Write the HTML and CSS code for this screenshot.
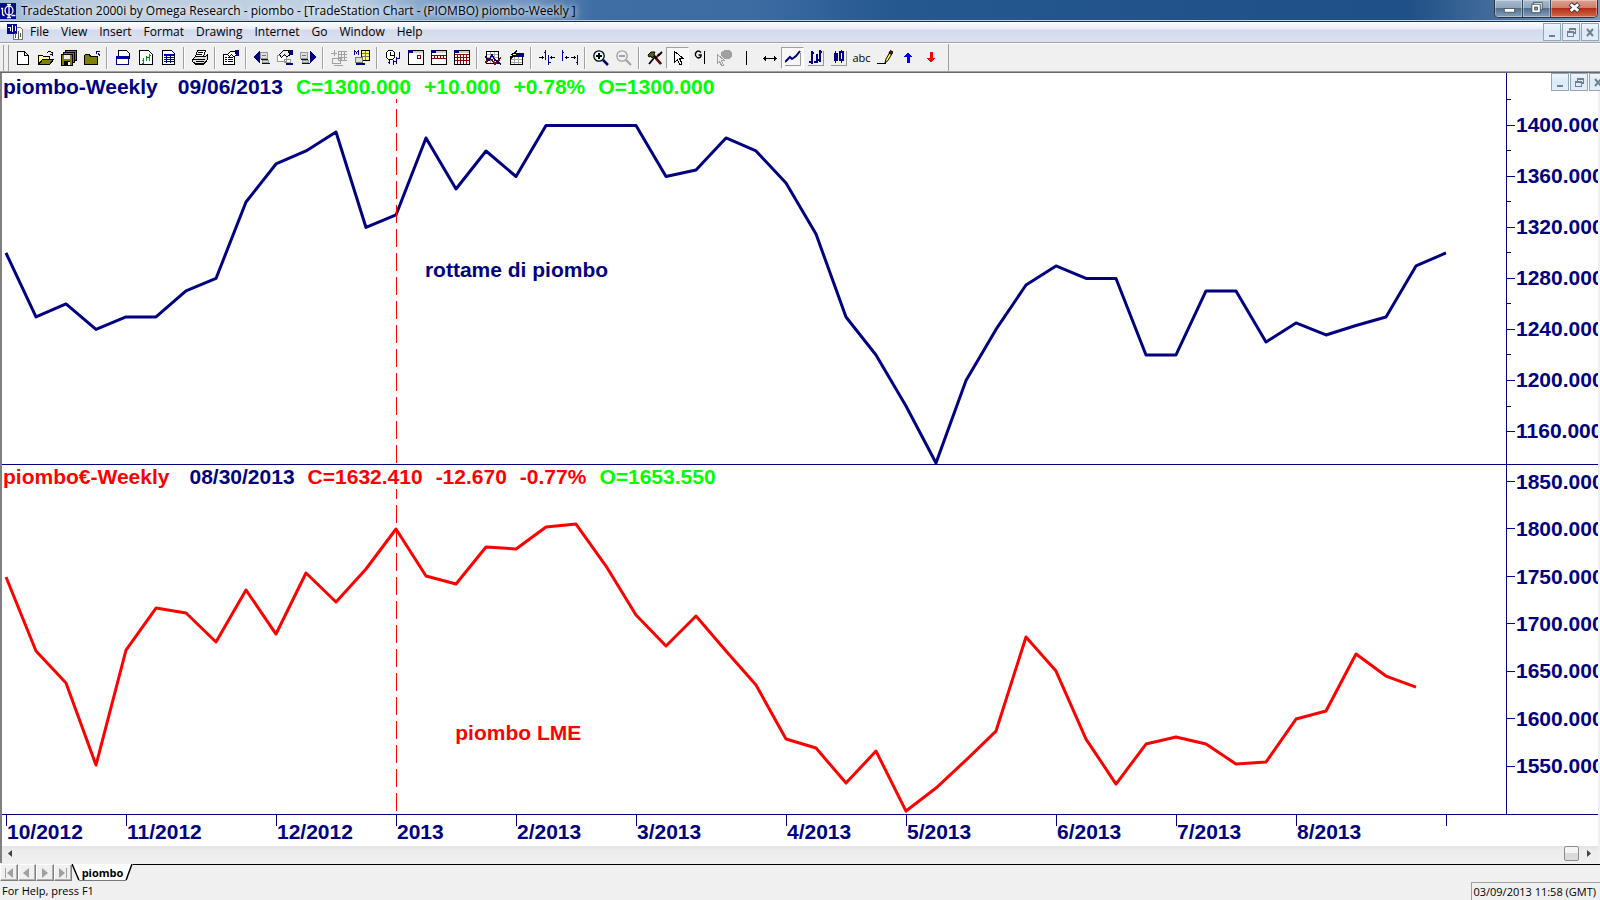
FILE: index.html
```html
<!DOCTYPE html>
<html lang="en">
<head>
<meta charset="utf-8">
<title>TradeStation 2000i by Omega Research - piombo</title>
<link rel="stylesheet" href="styles.css">
</head>
<body>
<header class="titlebar">
  <svg class="app-icon" viewBox="0 0 16 16"><path fill="#000a8c" d="M0 0h16v16H0z"/><path fill="none" stroke="#fff" stroke-width="1.300" d="M1 5.500h1.500v5q0 2 2 2M9 1.500v13M7 1.500h4M7 14.500h4M11.500 12.500h4"/><ellipse cx="9" cy="7.500" rx="4" ry="4.500" fill="none" stroke="#fff" stroke-width="1.300"/></svg>
  <h1 class="title">TradeStation 2000i by Omega Research - piombo - [TradeStation Chart - (PIOMBO) piombo-Weekly ]</h1>
  <div class="win-buttons">
    <button class="win-btn" aria-label="Minimize"><svg viewBox="0 0 28 18"><rect x="9" y="9" width="11" height="4" fill="#fff" stroke="#4b5a6c"/></svg></button>
    <button class="win-btn" aria-label="Restore"><svg viewBox="0 0 28 18"><g fill="#fff" stroke="#3f4d5e"><path d="M10.500 2.500h9v8h-9z"/><path d="M8.500 4.500h9v9h-9z"/><path fill="#8fa3b8" d="M11.500 7.500h3v3h-3z"/></g></svg></button>
    <button class="win-btn win-close" aria-label="Close"><svg viewBox="0 0 46 18"><path d="M19 4l9 8M28 4l-9 8" stroke="#3d3036" stroke-width="5"/><path d="M19.500 4.500l8 7M27.500 4.500l-8 7" stroke="#fff" stroke-width="3"/></svg></button>
  </div>
</header>

<nav class="menubar">
  <svg class="doc-icon" viewBox="0 0 16 16" shape-rendering="crispEdges"><path fill="#fff" stroke="#777" d="M6.500 3.500h7l2 2v10h-9z"/><path fill="#000a8c" d="M0 0h10v10H0z"/><path fill="none" stroke="#fff" d="M1 3h2v4M5.500 1v7M8 2v5"/><path fill="none" stroke="#555" d="M8 9v5M11.500 7v8M13 9v4"/></svg>
  <button class="menu">File</button><button class="menu">View</button><button class="menu">Insert</button><button class="menu">Format</button><button class="menu">Drawing</button><button class="menu">Internet</button><button class="menu">Go</button><button class="menu">Window</button><button class="menu">Help</button>
  <div class="mdi-buttons">
    <button class="mdi-btn" aria-label="Minimize chart"><svg viewBox="0 0 16 16"><path d="M5 11h6v2H5z"/></svg></button>
    <button class="mdi-btn" aria-label="Restore chart"><svg viewBox="0 0 16 16"><path fill-rule="evenodd" d="M6 4h7v6h-2V8h1V6H7v1H6zM4 7h7v6H4zM5 9v3h5V9z"/></svg></button>
    <button class="mdi-btn" aria-label="Close chart"><svg viewBox="0 0 16 16"><path d="M5 5l6 7M11 5l-6 7" stroke="#72808e" stroke-width="2"/></svg></button>
  </div>
</nav>

<div class="toolbar" role="toolbar" aria-label="Charting">
  <span class="grip"></span>
  <button class="tool" aria-label="New"><svg viewBox="0 0 16 16"><path fill="#fff" stroke="#000" d="M2.500 1.500h7l4 4v9h-11zM9.500 1.500v4h4"/></svg></button>
  <button class="tool" aria-label="Open"><svg viewBox="0 0 16 16"><path fill="#ffffa0" stroke="#000" d="M.5 13.500v-8h4l1 1h6v2"/><path fill="#808000" stroke="#000" d="M.5 14.500l4-5h11l-4 5z"/><path fill="none" stroke="#000" d="M9 2.500h1M10 1.500h3M13 2.500h1M14.500 2v4M12 4.500h3"/></svg></button>
  <button class="tool" aria-label="Save all"><svg viewBox="0 0 16 16"><g fill="#808000" stroke="#000"><path d="M4.500.5h11v10h-11z"/><path d="M2.500 2.500h11v10h-11z"/><path d="M.5 4.500h11v11H.5z"/></g><path fill="#eee" d="M3 5h6v4H3z"/><path fill="#000" d="M3 11h6v4H3z"/><path fill="#fff" d="M7 12h2v3H7z"/></svg></button>
  <button class="tool" aria-label="Close folder"><svg viewBox="0 0 16 16"><path fill="#808000" stroke="#000" d="M.5 14.500v-9l1-1h4l1 2h7v8z"/><path fill="none" stroke="#000080" d="M12.500 1v3M12 1.500h4M14 3h1M14 4h2M15.500 4v2"/></svg></button>
  <span class="sep"></span>
  <button class="tool" aria-label="Window"><svg viewBox="0 0 16 16"><path fill="#fff" stroke="#000" d="M3.500.5h8l3 3v5h-11z"/><path fill="#fff" stroke="#000080" d="M1.500 6.500h12v8h-12z"/><path fill="#0000a0" d="M1 6h13v3H1z"/></svg></button>
  <button class="tool" aria-label="New chart"><svg viewBox="0 0 16 16"><path fill="#fff" stroke="#000" d="M1.500.5h9l4 4v10h-13z"/><path fill="none" stroke="#00a000" d="M5.500 8v6M4 10.500h1M8.500 6v5M9 7.500h2M11.500 4v7"/><path fill="none" stroke="#008080" d="M4 13.500h2M8 10.500h1M11 5.500h2"/></svg></button>
  <button class="tool" aria-label="New grid"><svg viewBox="0 0 16 16"><path fill="#fff" stroke="#000" d="M1.500.5h9l3 3v11h-12z"/><path fill="none" stroke="#0000a0" d="M3 7.500h10M3 9.500h10M3 11.500h10M5.500 4v9M9.500 4v9"/><path fill="#0000c0" d="M3 4h10v2H3z"/></svg></button>
  <span class="sep"></span>
  <button class="tool" aria-label="Print"><svg viewBox="0 0 16 16"><path fill="#fff" stroke="#000" d="M5.500.5h8l-2 6h-8z"/><path stroke="#000" d="M6 2.500h5M5 4.500h5"/><path fill="#ddd" stroke="#000" d="M.5 9.500l3-3h10l2-2v5l-3 4H3l-2.500-2z"/><path stroke="#000" fill="none" d="M1 9.500h12M4 11.500h8M12 13.500l3-3M3 14.500h9"/></svg></button>
  <span class="sep"></span>
  <button class="tool" aria-label="Properties"><svg viewBox="0 0 16 16"><path fill="#fff" stroke="#000" d="M.5 4.500h11v10H.5z"/><path stroke="#000" d="M2 7.500h2M5 7.500h5M2 9.500h2M5 9.500h5M2 11.500h2M5 11.500h5"/><path fill="#fff" stroke="#000" d="M4.500 4.500l3-3h5l1 4-3 1-2-2-2 2z"/><path fill="#000080" d="M12 0h4v6h-3z"/></svg></button>
  <span class="sep"></span>
  <button class="tool" aria-label="Previous"><svg viewBox="0 0 16 16"><path fill="#000080" stroke="#000080" d="M.5 7L5.500 2v10z"/><path fill="#ddd" stroke="#999" d="M6.500 2.500h7v6h-7zM8.500 10.500h6v2h-6z"/><path fill="none" stroke="#000080" d="M7 9.500h7M8 13.500h8"/><path stroke="#777" d="M8 5.500h4"/></svg></button>
  <button class="tool" aria-label="Symbol settings"><svg viewBox="0 0 16 16"><path fill="#fff" stroke="#999" d="M.5 5.500h9v6h-9zM7.500 9.500h6v3h-6z"/><path fill="#eee" stroke="#000" d="M2.500 4.500l4-4h5l1 5-3 1-2-2-3 3z"/><path fill="#000080" d="M12 0h4v5h-3zM9 13h7v2H9z"/></svg></button>
  <button class="tool" aria-label="Next"><svg viewBox="0 0 16 16"><path fill="#000080" stroke="#000080" d="M15.500 7L10.500 2v10z"/><path fill="#ddd" stroke="#999" d="M.5 2.500h7v6h-7zM2.500 10.500h6v2h-6z"/><path fill="none" stroke="#000080" d="M1 9.500h7M2 13.500h8"/><path stroke="#777" d="M2 5.500h4"/></svg></button>
  <span class="sep"></span>
  <button class="tool" aria-label="Add symbol" disabled><svg viewBox="0 0 16 16"><path fill="none" stroke="#a0a0a0" d="M0 3.500h6M3.500 0v6M7 1.500h9v9H7zM7 4.500h9M7 7.500h9M10.500 1v9M13.500 1v9M1 8.500h8v5H1zM3 15.500h9"/></svg></button>
  <button class="tool" aria-label="Market data"><svg viewBox="0 0 16 16"><path fill="#ffff60" stroke="#000" d="M7.500.5h8v10h-8z"/><path stroke="#777" d="M8 3.500h7M8 6.500h7M11.500 1v9"/><path fill="none" stroke="#000080" d="M.5 5V0M1 1.500h1M2.500 2v2M3 1.500h1M4.500 0v5"/><path fill="#ddd" stroke="#777" d="M1.500 7.500h7v5h-7z"/><path fill="#000080" d="M2 13h9v2H2z"/></svg></button>
  <span class="sep"></span>
  <button class="tool" aria-label="Time interval"><svg viewBox="0 0 16 16"><circle cx="5.500" cy="5" r="4.500" fill="#fff" stroke="#000"/><path fill="none" stroke="#000" d="M5.500 2v3.500h3"/><path fill="none" stroke="#000080" d="M4.500 10v4M3 12.500h1M8.500 10v5M9 11.500h2M11.500 7v7M14.500 2v7M12 8.500h2"/></svg></button>
  <button class="tool" aria-label="Daily"><svg viewBox="0 0 16 16"><path fill="#fff" stroke="#000" d="M.5.5h15v14H.5z"/><path fill="#000080" d="M0 0h5v3H0z"/><path fill="#ccc" d="M5 1h10v2H5z"/><path fill="none" stroke="#900000" stroke-width="1" d="M9.500 5.500h3v3h-3z"/></svg></button>
  <button class="tool" aria-label="Weekly"><svg viewBox="0 0 16 16"><path fill="#fff" stroke="#000" d="M.5.5h15v14H.5z"/><path fill="#000080" d="M0 0h5v3H0z"/><path fill="#ccc" d="M5 1h10v2H5z"/><path fill="none" stroke="#900000" d="M1 5.500h14M1 8.500h14M3.500 5v4M6.500 5v4M9.500 5v4M12.500 5v4"/></svg></button>
  <button class="tool" aria-label="Monthly"><svg viewBox="0 0 16 16"><path fill="#fff" stroke="#000" d="M.5.5h15v14H.5z"/><path fill="#000080" d="M0 0h5v3H0z"/><path fill="#ccc" d="M5 1h10v2H5z"/><path fill="none" stroke="#900000" d="M1 4.500h14M1 7.500h14M1 10.500h14M3.500 4v10M6.500 4v10M9.500 4v10M12.500 4v10"/></svg></button>
  <span class="sep"></span>
  <button class="tool" aria-label="Analysis technique"><svg viewBox="0 0 16 16"><path fill="#fff" stroke="#000" d="M1.500 1.500h12v12h-12z"/><path stroke="#aaa" d="M2 4.500h11M2 7.500h11M5.500 2v11M9.500 2v11"/><path fill="none" stroke="#900000" stroke-width="1.500" d="M0 13l4-4 3 1 3 4 4-4 2-3"/><path fill="none" stroke="#000080" stroke-width="1.500" d="M0 7l4 3 3-5 3 5 3 2 3 2"/></svg></button>
  <button class="tool" aria-label="Strategy"><svg viewBox="0 0 16 16"><path fill="#fff" stroke="#000" d="M2.500 6.500h12v8h-12z"/><path stroke="#aaa" d="M3 9.500h11M3 12.500h11M6.500 7v7M10.500 7v7"/><path fill="#000080" d="M7 3h9v4H7z"/><path fill="#ffff00" stroke="#000" d="M4 4.500l5-4-2 3h3l-8 6 3-4z"/></svg></button>
  <span class="sep"></span>
  <button class="tool" aria-label="Decrease spacing"><svg viewBox="0 0 16 16"><path fill="none" stroke="#0000a0" d="M6.500 0v10M5 2.500h1M9.500 5v10M10 12.500h2"/><path stroke="#000" fill="none" d="M0 7.500h5M3.500 6v3M11 7.500h5M12.500 6v3"/></svg></button>
  <button class="tool" aria-label="Increase spacing"><svg viewBox="0 0 16 16"><path fill="none" stroke="#0000a0" d="M.5 0v11M1 2.500h1M15.500 5v10M14 12.500h1"/><path stroke="#000" fill="none" d="M3 7.500h4M4.500 6v3M9 7.500h5M12.500 6v3"/></svg></button>
  <span class="sep"></span>
  <button class="tool" aria-label="Zoom in"><svg viewBox="0 0 16 16" class="smooth"><circle cx="6" cy="6" r="5.200" fill="#dff" stroke="#000" stroke-width="1.300"/><path stroke="#000" stroke-width="2" d="M3 6h6M6 3v6"/><path stroke="#000080" stroke-width="2.500" d="M10 10l5 5"/></svg></button>
  <button class="tool" aria-label="Zoom out" disabled><svg viewBox="0 0 16 16" class="smooth"><circle cx="6" cy="6" r="5.200" fill="none" stroke="#a0a0a0" stroke-width="1.300"/><path stroke="#a0a0a0" stroke-width="2" d="M3 6h6"/><path stroke="#a0a0a0" stroke-width="2" d="M10 10l5 5"/></svg></button>
  <span class="sep"></span>
  <button class="tool" aria-label="Build"><svg viewBox="0 0 16 16" class="smooth"><path stroke="#900000" stroke-width="2" d="M12 4L9 8"/><path stroke="#000" stroke-width="1.800" d="M15 2l-4 4M2 14l5-6"/><path fill="#606000" stroke="#000" d="M1 5l3-3h4L7 4l1 2-3 2-1-2-2 1z"/><path stroke="#000" stroke-width="2.600" d="M7 6l7 8"/><path stroke="#900000" stroke-width="1.200" d="M9 9l5 5"/></svg></button>
  <button class="tool pressed" aria-label="Pointer"><svg viewBox="0 0 16 16"><path fill="#fff" stroke="#000" d="M4.500 1.500v11l3-3 2 5h2v-2l-2-4h4z"/></svg></button>
  <button class="tool" aria-label="Global cursor"><svg viewBox="0 0 16 16"><path fill="none" stroke="#000" stroke-width="1.400" class="smooth" d="M8 2.500Q5-.5 3 2.500T5 8q3 0 3.200-3H5.500"/><path stroke="#000" d="M11.500 1v13"/></svg></button>
  <button class="tool" aria-label="Hand pointer" disabled><svg viewBox="0 0 16 16"><path fill="#a0a0a0" d="M5 2l4-2h5l2 3v3l-3 3H8L5 6z"/><path fill="#eee" stroke="#a0a0a0" d="M1.500 4.500v9l2-2 2 4h2l-2-5h3z"/></svg></button>
  <button class="tool" aria-label="Vertical line"><svg viewBox="0 0 16 16"><path stroke="#000" d="M7.500 1v14"/></svg></button>
  <button class="tool" aria-label="Horizontal line"><svg viewBox="0 0 16 16"><path fill="none" stroke="#000" d="M1 8.500h14M3.500 6v5M2.500 7v3M12.500 6v5M13.500 7v3"/></svg></button>
  <button class="tool pressed" aria-label="Line chart"><svg viewBox="0 0 16 16" class="smooth"><path fill="none" stroke="#999" d="M0 15.500h15.500V3"/><path fill="none" stroke="#000080" stroke-width="2" d="M0 12l5-5 2 2 4-3 4-5"/></svg></button>
  <button class="tool" aria-label="Bar chart"><svg viewBox="0 0 16 16"><path fill="none" stroke="#999" d="M0 15.500h15.500V1"/><path fill="none" stroke="#000080" stroke-width="2" d="M4 1v13M1 12h3M4 3h2M9 4v9M6 12h3M12 0v12M9 10h3M12 2h2"/></svg></button>
  <button class="tool" aria-label="Candlestick chart"><svg viewBox="0 0 16 16"><path fill="none" stroke="#999" d="M0 15.500h15.500V1"/><path fill="none" stroke="#000080" d="M4.500 1v12M10.500 0v13"/><path fill="#000080" d="M3 3h4v8H3z"/><path fill="#fff" stroke="#000080" stroke-width="1.500" d="M9 2h3v8H9z"/></svg></button>
  <button class="tool tool-text" aria-label="Text">abc</button>
  <button class="tool" aria-label="Pencil"><svg viewBox="0 0 16 16" class="smooth"><path stroke="#000" d="M0 13.500h9"/><path fill="#ffff40" stroke="#000" d="M8 13l1-4 4-7 2 1.500-4 7z"/><path fill="#900000" stroke="#000" d="M12 3l1.500-2.500L16 2l-1.500 2.500z"/></svg></button>
  <button class="tool" aria-label="Up arrow"><svg viewBox="0 0 16 16"><path fill="#00f" d="M8 2l4 5h-2v6H7V7H4z"/></svg></button>
  <button class="tool" aria-label="Down arrow"><svg viewBox="0 0 16 16"><path fill="#f00" d="M8 13l4-5h-2V2H7v6H4z"/></svg></button>
  <span class="toolbar-end"></span>
</div>

<main class="chart">
  <section class="pane pane-top">
    <svg class="plot" viewBox="0 0 1504 391" preserveAspectRatio="none">
      <polyline class="series navy" points="4,180 34,244 64,231 94,256.500 124,244 154,244 184,218 214,205.500 244,129 274,91 304,78 334,59 364,154.500 394,142 424,65 454,116 484,78 514,103.500 544,52.500 574,52.500 604,52.500 634,52.500 664,103.500 694,97 724,65 754,78 784,110 814,161 844,244 874,282 904,333 934,390 964,307.500 994,256.500 1024,212 1054,193 1084,205.500 1114,205.500 1144,282 1174,282 1204,218 1234,218 1264,269 1294,250 1324,262 1354,252.500 1384,244 1414,193 1444,180"/>
      <path class="marker marker-top" d="M394.500 26V391"/>
    </svg>
    <div class="readout"><span>piombo-Weekly</span><span class="date">09/06/2013</span><span class="lime">C=1300.000</span><span class="lime">+10.000</span><span class="lime">+0.78%</span><span class="lime">O=1300.000</span></div>
    <div class="note note-top">rottame di piombo</div>
    <div class="axis axis-top">
      <svg class="ticks" viewBox="0 0 8 391" preserveAspectRatio="none"><path d="M0 52.500h8M0 103.500h8M0 154.500h8M0 205.500h8M0 256.500h8M0 307.500h8M0 358.500h8M0 26.500h4M0 77.500h4M0 128.500h4M0 179.500h4M0 230.500h4M0 281.500h4M0 333.500h4"/></svg>
      <div class="scale scale-top"><span>1400.000</span><span>1360.000</span><span>1320.000</span><span>1280.000</span><span>1240.000</span><span>1200.000</span><span>1160.000</span></div>
    </div>
  </section>
  <section class="pane pane-bottom">
    <svg class="plot" viewBox="0 0 1504 349" preserveAspectRatio="none">
      <polyline class="series red" points="4,112 34,186 64,218 94,300 124,185 154,143 184,148 214,177 244,125 274,169 304,108 334,137 364,104 394,64 424,111 454,119 484,82 514,84 544,62 574,59 604,101 634,150 664,181 694,151 724,186 754,220 784,274 814,283 844,318 874,286 904,346 934,323 964,295 994,266 1024,172 1054,206 1084,274 1114,319 1144,279 1174,272 1204,279 1234,299 1264,297 1294,254 1324,246 1354,189 1384,211 1414,222"/>
      <path class="marker marker-bottom" d="M394.500 24V349"/>
    </svg>
    <div class="readout red-text"><span>piombo€-Weekly</span><span class="date">08/30/2013</span><span>C=1632.410</span><span>-12.670</span><span>-0.77%</span><span class="lime">O=1653.550</span></div>
    <div class="note note-bottom">piombo LME</div>
    <div class="axis axis-bottom">
      <svg class="ticks" viewBox="0 0 8 349" preserveAspectRatio="none"><path d="M0 16.500h8M0 63.500h8M0 111.500h8M0 158.500h8M0 206.500h8M0 253.500h8M0 301.500h8"/></svg>
      <div class="scale scale-bottom"><span>1850.000</span><span>1800.000</span><span>1750.000</span><span>1700.000</span><span>1650.000</span><span>1600.000</span><span>1550.000</span></div>
    </div>
  </section>
  <div class="dates"><div class="months"><span>10/2012</span><span>11/2012</span><span>12/2012</span><span>2013</span><span>2/2013</span><span>3/2013</span><span>4/2013</span><span>5/2013</span><span>6/2013</span><span>7/2013</span><span>8/2013</span><span></span></div></div>
  <div class="mdi-buttons chart-buttons">
    <button class="mdi-btn" aria-label="Minimize"><svg viewBox="0 0 16 16"><path d="M5 11h6v2H5z"/></svg></button>
    <button class="mdi-btn" aria-label="Restore"><svg viewBox="0 0 16 16"><path fill-rule="evenodd" d="M6 4h7v6h-2V8h1V6H7v1H6zM4 7h7v6H4zM5 9v3h5V9z"/></svg></button>
    <button class="mdi-btn" aria-label="Close"><svg viewBox="0 0 16 16"><path d="M5 5l6 7M11 5l-6 7" stroke="#72808e" stroke-width="2"/></svg></button>
  </div>
</main>

<div class="scrollbar">
  <button class="scroll-arrow" aria-label="Scroll left"><svg viewBox="0 0 16 16"><path d="M10 4v7L6 7.500z"/></svg></button>
  <span class="thumb"></span>
  <button class="scroll-arrow" aria-label="Scroll right"><svg viewBox="0 0 16 16"><path d="M6 4v7l4-3.500z"/></svg></button>
</div>

<div class="tabs">
  <button class="tab-nav" aria-label="First"><svg viewBox="0 0 16 14"><path d="M4 2h1v10H4zM12 2v10L6 7z"/></svg></button>
  <button class="tab-nav" aria-label="Previous tab"><svg viewBox="0 0 16 14"><path d="M10 2v10L4 7z"/></svg></button>
  <button class="tab-nav" aria-label="Next tab"><svg viewBox="0 0 16 14"><path d="M5 2v10l6-5z"/></svg></button>
  <button class="tab-nav" aria-label="Last"><svg viewBox="0 0 16 14"><path d="M4 2v10l6-5zM11 2h1v10h-1z"/></svg></button>
  <button class="tab"><svg viewBox="0 0 62 18" preserveAspectRatio="none"><path fill="#fff" d="M0 0h61l-6 16H7z"/><path fill="none" stroke="#000" stroke-width="1.500" d="M0 0l7 16M61 0l-6 16"/><path stroke="#777" d="M7 16.500h48"/></svg><span>piombo</span></button>
  <span class="tab-line"></span>
</div>

<footer class="status"><span>For Help, press F1</span><time class="clock">03/09/2013 11:58 (GMT)</time></footer>
</body>
</html>
```
FILE: styles.css
```css
* { box-sizing: border-box; }
html, body { height: 100%; }
body {
  margin: 0;
  display: flex;
  flex-direction: column;
  overflow: hidden;
  background: #f0f0f0;
  color: #000;
  font: 12px/16px "Open Sans", "Noto Sans", sans-serif;
}
button {
  margin: 0;
  padding: 0;
  border: 0;
  background: none;
  color: inherit;
  font: inherit;
}
svg { display: block; }

/* Title bar */
.titlebar {
  flex: none;
  display: flex;
  align-items: flex-start;
  height: 22px;
  padding-right: 2px;
  border-bottom: 1px solid #1c3046;
  background: linear-gradient(90deg, #9db8d4 0, #b9cbdd 5%, #c0d2e4 22%, #7fa0c6 27%, #7397c1 33%, #3f6ea5 37%, #3d6ca3 47%, #24588e 56%, #1f5087 88%, #416a99 93%, #7a9abb 100%);
  box-shadow: inset 0 -1px #b9cfe6;
}
.app-icon { width: 16px; height: 16px; margin: 3px 5px 0 0; }
.title {
  flex: 1;
  margin: 0;
  font-size: 12px;
  font-weight: 400;
  line-height: 21px;
  white-space: nowrap;
  overflow: hidden;
  text-shadow: 0 0 6px #fff, 0 0 6px #dfeaf5;
}
.win-buttons {
  display: flex;
  border: 1px solid #26364a;
  border-top: 0;
  border-radius: 0 0 5px 5px;
  overflow: hidden;
}
.win-btn {
  width: 28px;
  height: 17px;
  border-right: 1px solid #33475e;
  background: linear-gradient(#a8bacd 0, #90a5bc 45%, #536f8f 50%, #86a0bb 100%);
  box-shadow: inset 0 0 0 1px rgba(255, 255, 255, .35);
}
.win-btn svg { width: 28px; height: 17px; }
.win-close { width: 46px; border-right: 0; background: linear-gradient(#dca392 0, #cf7e69 45%, #b22e18 50%, #d36a4a 100%); }
.win-close svg { width: 46px; }

/* Menu bar */
.menubar {
  flex: none;
  display: flex;
  align-items: center;
  height: 20px;
  padding: 0 1px 0 7px;
  background: linear-gradient(#fff 0, #e9edf7 35%, #d4daec 40%, #dde2f2 100%);
}
.doc-icon { width: 16px; height: 16px; margin-right: 1px; }
.menu { padding: 0 6px; line-height: 18px; }
.mdi-buttons { display: flex; gap: 1px; margin-left: auto; }
.mdi-btn {
  width: 18px;
  height: 18px;
  border: 1px solid #93a5b8;
  background: linear-gradient(#eef5fc 0, #dce9f6 50%, #e2effb 100%);
}
.mdi-btn svg { width: 16px; height: 16px; fill: #72808e; }

/* Toolbar */
.toolbar {
  flex: none;
  display: flex;
  align-items: center;
  height: 31px;
  padding-top: 1px;
  border-top: 1px solid #a0a0a0;
  border-bottom: 1px solid #696969;
  box-shadow: inset 0 1px #fff, inset 0 -1px #a0a0a0;
}
.grip { width: 6px; height: 26px; margin: 0 2px 0 3px; border: solid #a0a0a0; border-width: 0 1px; }
.tool { display: grid; place-items: center; width: 23px; height: 22px; }
.tool svg { width: 16px; height: 16px; shape-rendering: crispEdges; }
.tool svg.smooth, .smooth { shape-rendering: auto; }
.tool-text { font-size: 11px; }
.pressed { border: 1px solid; border-color: #a0a0a0 #fff #fff #a0a0a0; background: #f8f8f8; }
.sep { width: 2px; height: 22px; margin: 0 3px; border-left: 1px solid #a0a0a0; border-right: 1px solid #fff; }
.toolbar-end { width: 1px; height: 28px; margin-left: 6px; background: #a0a0a0; }

/* Chart */
.chart {
  position: relative;
  flex: 1;
  min-height: 0;
  display: flex;
  flex-direction: column;
  margin-right: 2px;
  border-left: 2px solid #808080;
  background: #fff;
  color: #000080;
  font: bold 21px/24px "Liberation Sans", Arial, sans-serif;
}
.pane {
  position: relative;
  min-height: 0;
  display: grid;
  grid-template-columns: minmax(0, 1fr) 92px;
  grid-template-rows: minmax(0, 1fr);
  border-bottom: 1px solid #000080;
}
.pane-top { flex: 392 1 0; }
.pane-bottom { flex: 350 1 0; }
.plot { width: 100%; height: 100%; }
.series { fill: none; stroke-width: 3px; vector-effect: non-scaling-stroke; stroke-linejoin: round; }
.navy { stroke: #000080; }
.red { stroke: #f00; }
.marker { stroke: #f00; stroke-width: 1px; stroke-dasharray: 18 6; vector-effect: non-scaling-stroke; shape-rendering: crispEdges; }
.marker-top { stroke-dashoffset: 14px; }
.marker-bottom { stroke-dashoffset: 8px; }
.readout {
  position: absolute;
  top: 2px;
  left: 1px;
  display: flex;
  gap: 13px;
  white-space: nowrap;
}
.pane-bottom .readout { top: 0; }
.date { margin-left: 7px; }
.lime { color: #0f0; }
.red-text { color: #f00; }
.red-text .date { color: #000080; }
.red-text .lime { color: #0f0; }
.note { position: absolute; white-space: nowrap; }
.note-top { left: 26.500%; top: 47.200%; }
.note-bottom { left: 28.400%; top: 73.500%; color: #f00; }
.axis {
  display: flex;
  min-height: 0;
  border-left: 1px solid #000080;
  overflow: hidden;
}
.ticks { flex: none; width: 8px; height: 100%; fill: none; }
.ticks path { stroke: #000080; vector-effect: non-scaling-stroke; shape-rendering: crispEdges; }
.scale { display: flex; flex-direction: column; height: 100%; padding-left: 1px; }
.scale span { flex: 51 1 0; display: flex; align-items: center; min-height: 0; }
.scale-top::before { content: ""; flex: 27 1 0; }
.scale-top::after { content: ""; flex: 7 1 0; }
.scale-bottom span { flex-grow: 95; }
.scale-bottom::before { content: ""; flex: 0 0 0; margin-top: -7px; }
.scale-bottom::after { content: ""; flex: 48 1 0; }
.dates { flex: none; height: 31px; padding: 0 92px 0 4px; }
.months { display: grid; height: 31px; grid-template-columns: 120fr 150fr 120fr 120fr 120fr 150fr 120fr 150fr 120fr 120fr 150fr 60fr; }
.months span {
  min-width: 0;
  padding: 5px 0 0 1px;
  white-space: nowrap;
  background: linear-gradient(#000080, #000080) left top / 1px 11px no-repeat;
}
.chart-buttons { position: absolute; top: 0; right: -9px; }

/* Scroll bar */
.scrollbar {
  flex: none;
  display: flex;
  align-items: flex-start;
  height: 17px;
  margin-right: 2px;
  border-left: 2px solid #808080;
  background: linear-gradient(#e3e3e3, #ededed 30%, #efefef);
}
.scroll-arrow { width: 17px; height: 16px; }
.scroll-arrow svg { width: 16px; height: 16px; fill: #404040; }
.thumb { width: 15px; height: 15px; margin: 0 2px 0 auto; border: 1px solid #8c8c8c; border-radius: 2px; background: linear-gradient(#f5f5f5 45%, #d9d9d9 50%, #dcdcdc); }

/* Workspace tabs */
.tabs { flex: none; display: flex; height: 19px; padding-top: 1px; }
.tab-nav { width: 18px; height: 17px; border: 1px solid; border-color: #fff #808080 #808080 #fff; box-shadow: inset -1px -1px #b0b0b0; }
.tab-nav svg { width: 16px; height: 14px; fill: #a0a0a0; }
.tab { display: grid; width: 61px; height: 18px; font-weight: 700; font-size: 11px; line-height: 17px; }
.tab svg, .tab span { grid-area: 1 / 1; }
.tab svg { width: 61px; height: 18px; }
.tab span { position: relative; }
.tab-line { flex: 1; border-top: 1px solid #000; }

/* Status bar */
.status { flex: none; display: flex; justify-content: space-between; height: 18px; padding-left: 2px; font-size: 11px; line-height: 18px; }
.clock { height: 18px; padding: 0 4px 0 1px; border: 1px solid #a0a0a0; border-right: 0; border-bottom: 0; white-space: nowrap; }
```
